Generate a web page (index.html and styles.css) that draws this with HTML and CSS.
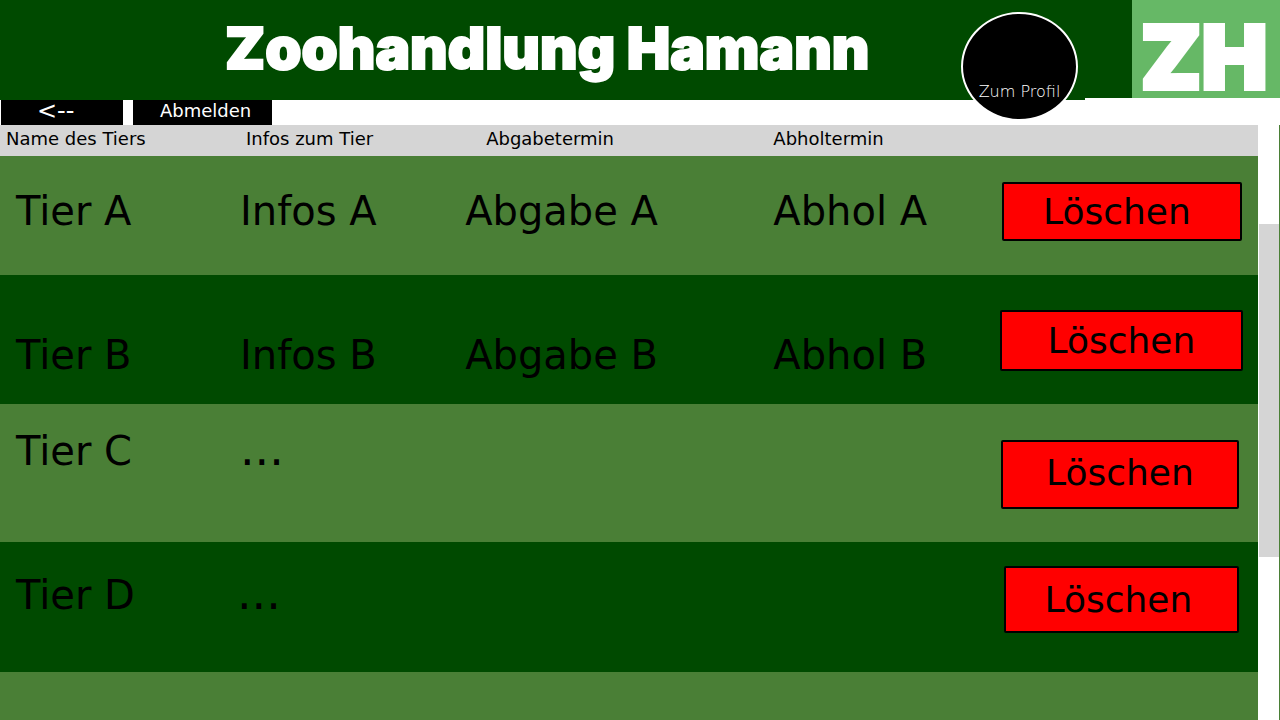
FILE: index.html
```html
<!DOCTYPE html>
<html lang="de">
<head>
<meta charset="utf-8">
<title>Zoohandlung Hamann</title>
<link rel="stylesheet" href="styles.css">
</head>
<body>
<header class="top">
  <div class="banner">
    <h1 class="title">Zoohandlung Hamann</h1>
    <button class="profile" type="button">Zum Profil</button>
  </div>
  <div class="brand"><div class="logo">ZH</div></div>
</header>
<nav class="nav">
  <button class="nav-btn back" type="button">&lt;--</button>
  <button class="nav-btn logout" type="button">Abmelden</button>
</nav>
<main class="content">
  <div class="list">
    <table class="animals">
      <colgroup><col class="c-name"><col class="c-info"><col class="c-drop"><col class="c-pick"><col></colgroup>
      <thead>
        <tr><th>Name des Tiers</th><th class="h-info">Infos zum Tier</th><th class="h-drop">Abgabetermin</th><th>Abholtermin</th><td></td></tr>
      </thead>
      <tbody>
        <tr class="row-a"><td>Tier A</td><td>Infos A</td><td>Abgabe A</td><td>Abhol A</td><td class="action"><button class="delete" type="button">Löschen</button></td></tr>
        <tr class="row-b"><td>Tier B</td><td>Infos B</td><td>Abgabe B</td><td>Abhol B</td><td class="action"><button class="delete" type="button">Löschen</button></td></tr>
        <tr class="row-c"><td>Tier C</td><td class="dots">...</td><td></td><td></td><td class="action"><button class="delete" type="button">Löschen</button></td></tr>
        <tr class="row-d"><td>Tier D</td><td class="dots">...</td><td></td><td></td><td class="action"><button class="delete" type="button">Löschen</button></td></tr>
      </tbody>
    </table>
  </div>
  <div class="scrollbar"><div class="thumb"></div></div>
</main>
</body>
</html>
```
FILE: styles.css
```css
* { box-sizing: border-box; }
body {
  margin: 0;
  min-height: 100vh;
  display: flex;
  flex-direction: column;
  background: #fff;
  color: #000;
  font-family: Verdana, "DejaVu Sans", sans-serif;
}
button { font-family: inherit; margin: 0; padding: 0; border: 0; cursor: pointer; }

.top { display: flex; align-items: flex-start; }
.banner {
  position: relative;
  flex: 1;
  height: 100px;
  padding-left: 225px;
  background: #004a00;
}
.title {
  margin: 0;
  font: 900 58px/96px Inter, sans-serif;
  color: #fff;
  white-space: nowrap;
  -webkit-text-stroke: 2px #fff;
}
.profile {
  position: absolute;
  right: 7px;
  top: 12px;
  width: 117px;
  height: 109px;
  padding-top: 50px;
  border: 2px solid #fff;
  border-radius: 50%;
  background: #000;
  color: #fff;
  font-size: 16px;
  font-weight: 200;
}
.brand { padding-left: 47px; background: #004a00; }
.logo {
  width: 148px;
  height: 98px;
  padding-right: 4px;
  background: #66b866;
  color: #fff;
  font: 900 88px/114px Inter, sans-serif;
  text-align: center;
  -webkit-text-stroke: 4px #fff;
}

.nav { display: flex; gap: 10px; padding-left: 1px; }
.nav-btn { height: 25px; background: #000; color: #fff; font-size: 18px; line-height: 22px; padding-bottom: 3px; text-align: left; }
.back { width: 122px; padding-left: 36px; font-size: 24px; }
.logout { width: 139px; padding-left: 27px; }

.content { flex: 1; display: flex; }
.list { flex: 1; background: #4a7f36; }
.animals { width: 100%; table-layout: fixed; border-collapse: collapse; }
.c-name { width: 18.6%; }
.c-info { width: 17.9%; }
.c-drop { width: 24.5%; }
.c-pick { width: 18%; }
thead tr { height: 31px; background: #d5d5d5; }
th {
  padding: 0 0 0 6px;
  font-size: 18px;
  font-weight: 400;
  line-height: 28px;
  text-align: left;
  vertical-align: top;
  white-space: nowrap;
}
.h-info { padding-left: 12px; }
.h-drop { padding-left: 27px; }
tbody td { padding: 0 0 0 6px; font-size: 40px; line-height: 48px; vertical-align: top; white-space: nowrap; }
tbody td:first-child { padding-left: 16px; }

.row-a { height: 119px; }
.row-b { height: 129px; background: #004a00; }
.row-c { height: 138px; }
.row-d { height: 130px; background: #004a00; }
.row-a td { padding-top: 31px; }
.row-b td { padding-top: 56px; }
.row-c td { padding-top: 23px; }
.row-d td { padding-top: 29px; }
.row-a .action { padding: 26px 16px 0 8px; }
.row-b .action { padding: 35px 15px 0 6px; }
.row-c .action { padding: 36px 19px 0 7px; }
.row-d .action { padding: 24px 19px 0 10px; }
.row-c .dots, .row-d .dots { font-size: 46px; line-height: 44px; }
.row-d .dots { padding-left: 3px; }

.delete {
  display: block;
  width: 100%;
  height: 59px;
  border: 2px solid #000;
  border-radius: 2px;
  background: #f00;
  color: #000;
  font-size: 36px;
}
.row-a .delete { padding-right: 10px; }
.row-b .delete { height: 61px; }
.row-c .delete { height: 69px; padding-bottom: 4px; }
.row-d .delete { height: 67px; padding-right: 6px; }

.scrollbar { width: 22px; padding: 99px 0 0 1px; border-right: 1px solid #4a7f36; }
.thumb { height: 333px; background: #d5d5d5; }
```
